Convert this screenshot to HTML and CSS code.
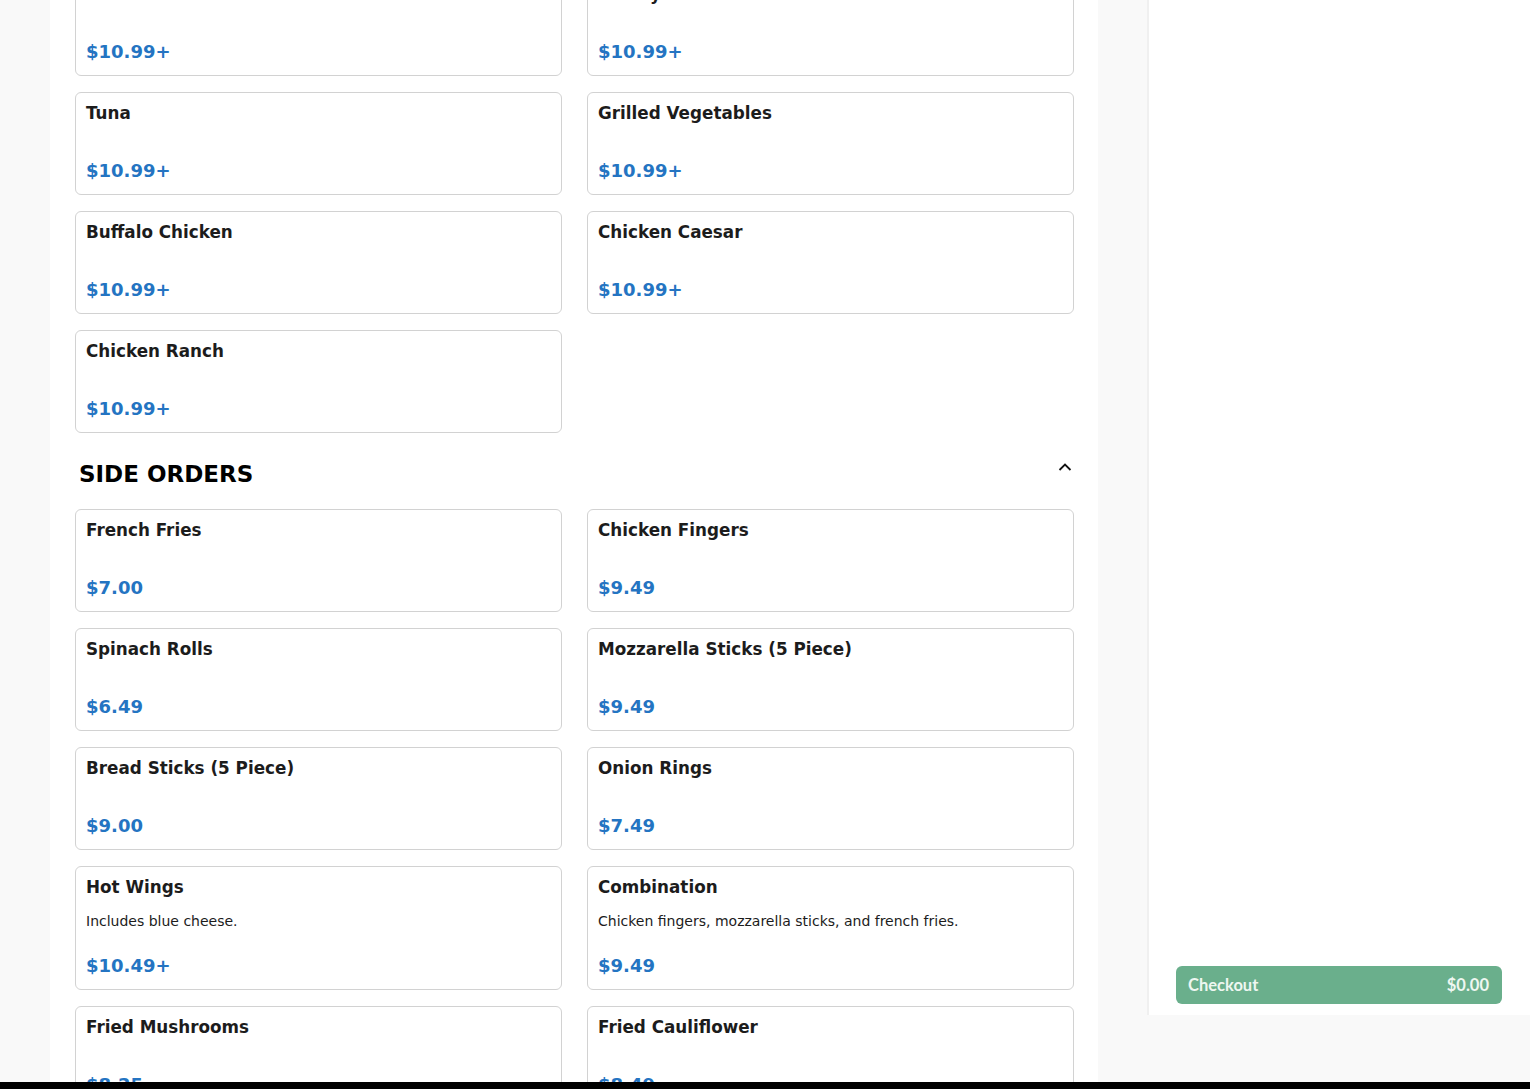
FILE: index.html
```html
<!DOCTYPE html>
<html lang="en">
<head>
    <meta charset="UTF-8">
    <meta name="viewport" content="width=device-width, initial-scale=1.0">
    <title>Menu</title>
    <link rel="stylesheet" href="styles.css">
</head>
<body>
    <div class="layout">
        <main class="menu">
            <div class="items items-top">
                <div class="item"><h3>Italian</h3><p class="desc"></p><div class="price">$10.99+</div></div>
                <div class="item"><h3>Turkey</h3><p class="desc"></p><div class="price">$10.99+</div></div>
                <div class="item"><h3>Tuna</h3><p class="desc"></p><div class="price">$10.99+</div></div>
                <div class="item"><h3>Grilled Vegetables</h3><p class="desc"></p><div class="price">$10.99+</div></div>
                <div class="item"><h3>Buffalo Chicken</h3><p class="desc"></p><div class="price">$10.99+</div></div>
                <div class="item"><h3>Chicken Caesar</h3><p class="desc"></p><div class="price">$10.99+</div></div>
                <div class="item"><h3>Chicken Ranch</h3><p class="desc"></p><div class="price">$10.99+</div></div>
            </div>

            <div class="section-head">
                <h2>SIDE ORDERS</h2>
                <svg class="chevron" width="14" height="10" viewBox="0 0 14 10">
                    <path d="M1.5 8 L7 2.5 L12.5 8" fill="none" stroke="#111" stroke-width="1.8"/>
                </svg>
            </div>

            <div class="items">
                <div class="item"><h3>French Fries</h3><p class="desc"></p><div class="price">$7.00</div></div>
                <div class="item"><h3>Chicken Fingers</h3><p class="desc"></p><div class="price">$9.49</div></div>
                <div class="item"><h3>Spinach Rolls</h3><p class="desc"></p><div class="price">$6.49</div></div>
                <div class="item"><h3>Mozzarella Sticks (5 Piece)</h3><p class="desc"></p><div class="price">$9.49</div></div>
                <div class="item"><h3>Bread Sticks (5 Piece)</h3><p class="desc"></p><div class="price">$9.00</div></div>
                <div class="item"><h3>Onion Rings</h3><p class="desc"></p><div class="price">$7.49</div></div>
                <div class="item"><h3>Hot Wings</h3><p class="desc">Includes blue cheese.</p><div class="price">$10.49+</div></div>
                <div class="item"><h3>Combination</h3><p class="desc">Chicken fingers, mozzarella sticks, and french fries.</p><div class="price">$9.49</div></div>
                <div class="item"><h3>Fried Mushrooms</h3><p class="desc"></p><div class="price">$8.25</div></div>
                <div class="item"><h3>Fried Cauliflower</h3><p class="desc"></p><div class="price">$8.49</div></div>
            </div>
        </main>

        <aside class="cart">
            <button class="checkout">
                <span>Checkout</span>
                <span>$0.00</span>
            </button>
        </aside>
    </div>
    <div class="bottom-bar"></div>
</body>
</html>
```

FILE: styles.css
```css
:root {
    --page: #f9f9f9;
    --border: #d2d2d2;
    --text: #1c1c1c;
    --price: #2474c2;
    --green: #6aaf8c;
    --radius: 6px;
}

html, body {
    height: 100%;
    overflow: hidden;
}

body {
    margin: 0;
    background: var(--page);
    font-family: 'DejaVu Sans', sans-serif;
    color: var(--text);
}

.layout {
    display: flex;
    align-items: flex-start;
    gap: 49px;
    padding-left: 50px;
}

.menu {
    width: 999px;
    flex-shrink: 0;
    background: white;
    padding: 0 24px 0 25px;
}

.items {
    display: grid;
    grid-template-columns: 1fr 1fr;
    column-gap: 25px;
    row-gap: 16px;
}

.items-top {
    margin-top: -27px;
}

.item {
    border: 1px solid var(--border);
    border-radius: var(--radius);
    padding: 10px 10px 12px;
    background: white;
}

.item h3 {
    margin: 0;
    font-size: 16.8px;
    line-height: 20px;
    font-weight: bold;
}

.desc {
    margin: 14px 0 24px;
    font-size: 14px;
    line-height: 20px;
}

.desc:empty {
    margin: 0 0 37px;
}

.price {
    color: var(--price);
    font-size: 18px;
    font-weight: bold;
    line-height: 22px;
}

.section-head {
    display: flex;
    justify-content: space-between;
    align-items: center;
    margin: 26px 0 20px;
    padding: 0 2px 0 4px;
}

.section-head h2 {
    margin: 0;
    font-size: 23px;
    line-height: 30px;
    color: #000;
}

.chevron {
    margin-top: -14px;
}

.cart {
    flex: 1;
    height: 1015px;
    background: white;
    border-left: 2px solid #f0f0f0;
    display: flex;
    flex-direction: column;
    justify-content: flex-end;
    padding: 0 28px 11px 27px;
    box-sizing: border-box;
}

.checkout {
    display: flex;
    justify-content: space-between;
    align-items: center;
    height: 38px;
    padding: 0 13px 0 12px;
    border: none;
    border-radius: var(--radius);
    background: var(--green);
    color: #eef7f1;
    font-family: 'Lato', sans-serif;
    font-size: 16.5px;
    font-weight: bold;
    cursor: pointer;
}

.bottom-bar {
    position: fixed;
    left: 0;
    right: 0;
    bottom: 0;
    height: 7px;
    background: #000;
}
```
